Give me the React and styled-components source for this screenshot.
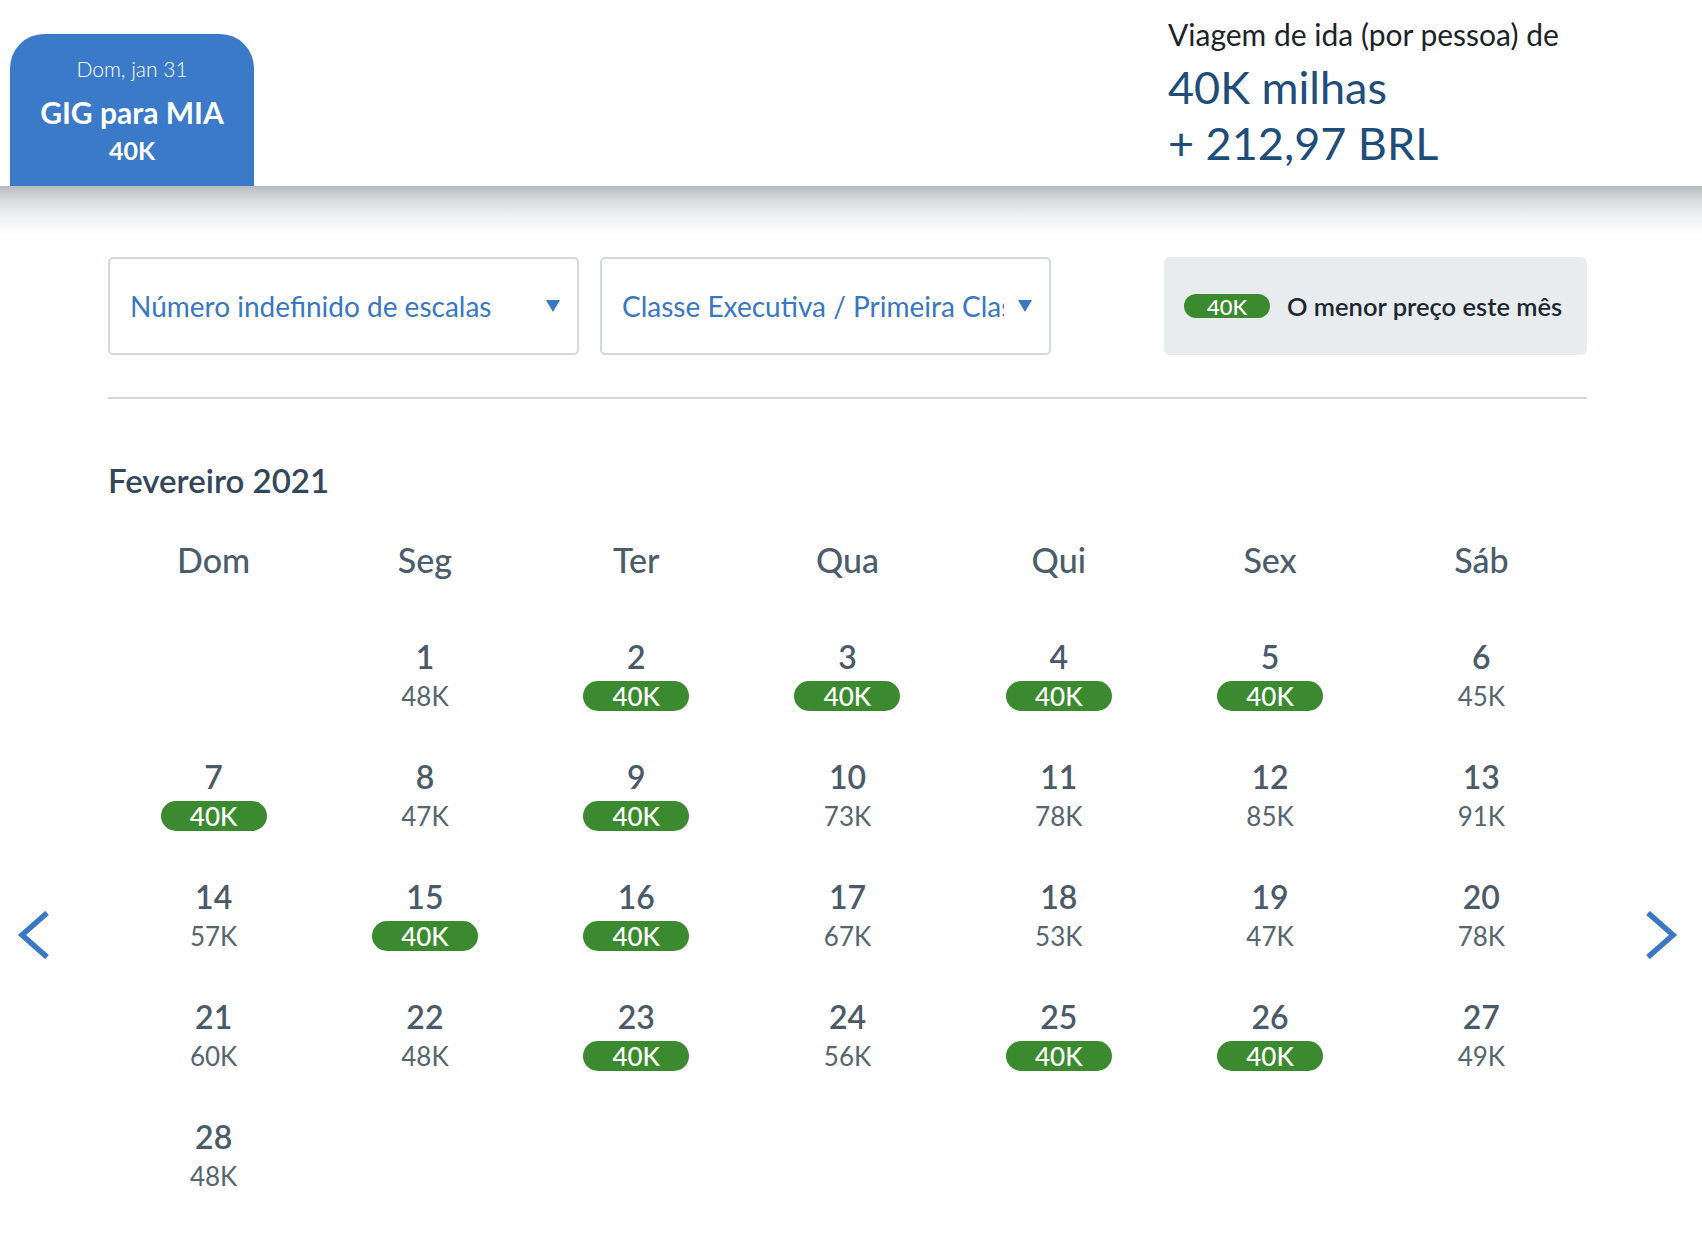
import styled, { createGlobalStyle } from 'styled-components';

const GlobalStyle = createGlobalStyle`
  html, body {
    margin: 0;
    padding: 0;
    background: #fff;
  }
  body {
    font-family: Lato, 'Noto Sans', sans-serif;
    -webkit-font-smoothing: antialiased;
  }
`;

const days = [
  null,
  { d: 1, p: '48K' },
  { d: 2, p: '40K', low: true },
  { d: 3, p: '40K', low: true },
  { d: 4, p: '40K', low: true },
  { d: 5, p: '40K', low: true },
  { d: 6, p: '45K' },
  { d: 7, p: '40K', low: true },
  { d: 8, p: '47K' },
  { d: 9, p: '40K', low: true },
  { d: 10, p: '73K' },
  { d: 11, p: '78K' },
  { d: 12, p: '85K' },
  { d: 13, p: '91K' },
  { d: 14, p: '57K' },
  { d: 15, p: '40K', low: true },
  { d: 16, p: '40K', low: true },
  { d: 17, p: '67K' },
  { d: 18, p: '53K' },
  { d: 19, p: '47K' },
  { d: 20, p: '78K' },
  { d: 21, p: '60K' },
  { d: 22, p: '48K' },
  { d: 23, p: '40K', low: true },
  { d: 24, p: '56K' },
  { d: 25, p: '40K', low: true },
  { d: 26, p: '40K', low: true },
  { d: 27, p: '49K' },
  { d: 28, p: '48K' },
];

const weekdays = ['Dom', 'Seg', 'Ter', 'Qua', 'Qui', 'Sex', 'Sáb'];

const Page = styled.div`
  width: 1702px;
  min-height: 1238px;
  background: #fff;
`;

const Header = styled.header`
  height: 186px;
  display: flex;
  align-items: flex-end;
  padding-left: 10px;
  box-sizing: border-box;
`;

const Tab = styled.div`
  width: 244px;
  height: 152px;
  background: #3a7ac9;
  border-radius: 34px 34px 0 0;
  color: #fff;
  display: flex;
  flex-direction: column;
  align-items: center;
  padding-top: 20px;
  box-sizing: border-box;
`;

const TabDate = styled.div`
  font-size: 21px;
  font-weight: 300;
  line-height: 30px;
`;

const TabRoute = styled.div`
  margin-top: 6px;
  font-size: 30px;
  font-weight: 700;
  line-height: 44px;
`;

const TabPrice = styled.div`
  font-size: 25px;
  font-weight: 700;
  line-height: 32px;
`;

const Summary = styled.div`
  margin-left: auto;
  width: 534px;
  align-self: flex-start;
  padding-top: 16px;
`;

const SummaryLabel = styled.div`
  font-size: 30px;
  line-height: 36px;
  color: #1d2329;
`;

const SummaryAmount = styled.div`
  font-size: 45px;
  line-height: 56px;
  color: #1e4d7a;
  margin-top: ${(p) => p.$gap || 0}px;
`;

const Shade = styled.div`
  height: 50px;
  background: linear-gradient(
    to bottom,
    #b6babe 0%,
    #dadddf 30%,
    #f1f2f3 65%,
    #fff 100%
  );
`;

const Content = styled.div`
  padding: 0 115px 0 108px;
`;

const Filters = styled.div`
  margin-top: 21px;
  display: flex;
  height: 98px;
`;

const Select = styled.div`
  width: ${(p) => p.$width}px;
  margin-right: ${(p) => p.$gap || 0}px;
  box-sizing: border-box;
  border: 2px solid #d3d9de;
  border-radius: 5px;
  display: flex;
  align-items: center;
  padding: 0 17px 0 20px;
  gap: 14px;
`;

const SelectText = styled.div`
  flex: 1;
  overflow: hidden;
  white-space: nowrap;
  font-size: 28px;
  color: #3a77c2;
`;

const Caret = styled.svg`
  width: 14px;
  height: 12px;
  flex-shrink: 0;
`;

const Legend = styled.div`
  margin-left: auto;
  width: 423px;
  background: #e9ecee;
  border-radius: 6px;
  display: flex;
  align-items: center;
  padding-left: 20px;
  box-sizing: border-box;
  gap: 17px;
`;

const Pill = styled.span`
  display: inline-flex;
  align-items: center;
  justify-content: center;
  width: ${(p) => p.$width}px;
  height: ${(p) => p.$height}px;
  border-radius: ${(p) => p.$height / 2}px;
  background: #3c8a2f;
  color: #fff;
  font-size: ${(p) => p.$size}px;
  font-weight: 500;
`;

const LegendText = styled.span`
  font-size: 25.5px;
  font-weight: 600;
  color: #1c2731;
`;

const Divider = styled.hr`
  margin: 42px 0 0;
  border: 0;
  height: 2px;
  background: #d3dade;
`;

const MonthTitle = styled.h2`
  margin: 61px 0 0;
  font-size: 33px;
  font-weight: 600;
  line-height: 40px;
  color: #34475a;
`;

const Weekdays = styled.div`
  margin-top: 40px;
  display: grid;
  grid-template-columns: repeat(7, 1fr);
`;

const Weekday = styled.div`
  text-align: center;
  font-size: 34px;
  font-weight: 500;
  line-height: 40px;
  color: #4b5c6b;
`;

const DaysRow = styled.div`
  margin-top: 57px;
  display: flex;
  align-items: center;
`;

const Nav = styled.button`
  width: ${(p) => p.$width}px;
  flex-shrink: 0;
  border: 0;
  background: none;
  padding: 42px 0 0;
  margin: 0;
  display: flex;
  justify-content: ${(p) => (p.$side === 'left' ? 'flex-start' : 'flex-end')};
  padding-left: ${(p) => (p.$side === 'left' ? 17 : 0)}px;
  padding-right: ${(p) => (p.$side === 'left' ? 0 : 24)}px;
  cursor: pointer;
`;

const DaysGrid = styled.div`
  flex: 1;
  display: grid;
  grid-template-columns: repeat(7, 1fr);
  row-gap: 46px;
`;

const Day = styled.div`
  display: flex;
  flex-direction: column;
  align-items: center;
  height: 74px;
`;

const DayNum = styled.div`
  font-size: 32px;
  font-weight: 600;
  line-height: 40px;
  color: #4a5a68;
`;

const DayPrice = styled.div`
  margin-top: 4px;
  height: 30px;
  line-height: 30px;
  font-size: 26px;
  color: #56656f;
`;

const Chevron = ({ dir }) => (
  <svg width="34" height="48" viewBox="0 0 34 48">
    <path
      d={dir === 'left' ? 'M30 2 L5 24 L30 46' : 'M4 2 L29 24 L4 46'}
      fill="none"
      stroke="#3a77c7"
      strokeWidth="5.5"
    />
  </svg>
);

const CaretDown = () => (
  <Caret viewBox="0 0 14 12">
    <path d="M0 0 H14 L7 12 Z" fill="#3a77c2" />
  </Caret>
);

export default function App() {
  return (
    <Page>
      <GlobalStyle />
      <Header>
        <Tab>
          <TabDate>Dom, jan 31</TabDate>
          <TabRoute>GIG para MIA</TabRoute>
          <TabPrice>40K</TabPrice>
        </Tab>
        <Summary>
          <SummaryLabel>Viagem de ida (por pessoa) de</SummaryLabel>
          <SummaryAmount $gap={7}>40K milhas</SummaryAmount>
          <SummaryAmount>+ 212,97 BRL</SummaryAmount>
        </Summary>
      </Header>
      <Shade />
      <Content>
        <Filters>
          <Select $width={471} $gap={21}>
            <SelectText>Número indefinido de escalas</SelectText>
            <CaretDown />
          </Select>
          <Select $width={451}>
            <SelectText>Classe Executiva / Primeira Classe</SelectText>
            <CaretDown />
          </Select>
          <Legend>
            <Pill $width={86} $height={24} $size={22}>40K</Pill>
            <LegendText>O menor preço este mês</LegendText>
          </Legend>
        </Filters>
        <Divider />
        <MonthTitle>Fevereiro 2021</MonthTitle>
        <Weekdays>
          {weekdays.map((w) => (
            <Weekday key={w}>{w}</Weekday>
          ))}
        </Weekdays>
      </Content>
      <DaysRow>
        <Nav $width={108} $side="left" aria-label="Mês anterior">
          <Chevron dir="left" />
        </Nav>
        <DaysGrid>
          {days.map((day, i) =>
            day ? (
              <Day key={i}>
                <DayNum>{day.d}</DayNum>
                {day.low ? (
                  <DayPrice>
                    <Pill $width={106} $height={30} $size={26}>
                      {day.p}
                    </Pill>
                  </DayPrice>
                ) : (
                  <DayPrice>{day.p}</DayPrice>
                )}
              </Day>
            ) : (
              <Day key={i} />
            )
          )}
        </DaysGrid>
        <Nav $width={115} $side="right" aria-label="Próximo mês">
          <Chevron dir="right" />
        </Nav>
      </DaysRow>
    </Page>
  );
}
